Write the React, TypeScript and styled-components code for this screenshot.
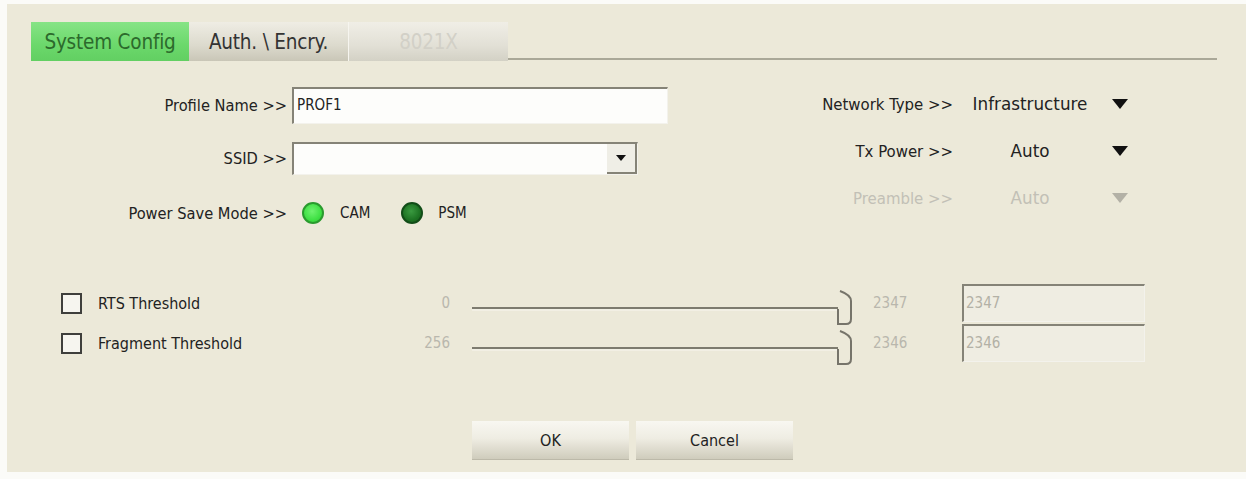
import React from 'react';
import styled, { createGlobalStyle } from 'styled-components';

const GlobalStyle = createGlobalStyle`
  html, body {
    margin: 0;
    padding: 0;
    background: #fbfbf8;
  }
  body {
    font-family: "DejaVu Sans", "Liberation Sans", sans-serif;
    font-stretch: condensed;
    color: #222;
  }
`;

const Window = styled.div`
  box-sizing: border-box;
  width: 1239px;
  height: 468px;
  margin: 4px 0 0 7px;
  background: #ece9d9;
  display: flex;
  flex-direction: column;
`;

const TabBar = styled.div`
  display: flex;
  align-items: flex-end;
  height: 39px;
  margin-top: 18px;
  padding-left: 24px;
`;

const Tab = styled.div<{ $active?: boolean; $disabled?: boolean; $w: number }>`
  box-sizing: border-box;
  width: ${p => p.$w}px;
  height: 39px;
  display: flex;
  align-items: center;
  justify-content: center;
  font-size: 20.5px;
  letter-spacing: -0.2px;
  color: ${p => (p.$active ? '#2c6a2c' : p.$disabled ? '#d2d0c7' : '#333')};
  background: ${p =>
    p.$active
      ? 'linear-gradient(#86e486, #6bd86b 60%, #62cf62)'
      : p.$disabled
      ? 'linear-gradient(#f0eee6, #e2e0d6 60%, #d3d1c5)'
      : 'linear-gradient(#efede4, #dcdacd 60%, #c9c6b7)'};
  border-left: ${p => (p.$disabled ? '1px solid #f6f5ef' : 'none')};
`;

const TabRule = styled.div`
  flex: 1;
  height: 2px;
  margin-right: 29px;
  margin-bottom: 1px;
  background: #aaa898;
`;

const FormArea = styled.div`
  display: flex;
  margin-top: 26px;
  height: 137px;
`;

const LeftForm = styled.div`
  display: flex;
  flex-direction: column;
`;

const FieldRow = styled.div<{ $h: number; $mt?: number }>`
  display: flex;
  align-items: center;
  height: ${p => p.$h}px;
  margin-top: ${p => p.$mt ?? 0}px;
`;

const FieldLabel = styled.span`
  width: 280px;
  margin-right: 5px;
  text-align: right;
  font-size: 16.3px;
  white-space: nowrap;
`;

const sunken = `
  box-sizing: border-box;
  border-top: 2px solid #858377;
  border-left: 2px solid #858377;
  border-right: 1px solid #f3f2ec;
  border-bottom: 1px solid #f3f2ec;
`;

const TextBox = styled.div`
  ${sunken}
  width: 376px;
  height: 37px;
  background: #fdfdfb;
  padding: 7px 0 0 3px;
  font-size: 15px;
`;

const SelectBox = styled.div`
  ${sunken}
  width: 346px;
  height: 33px;
  background: #fdfdfb;
  display: flex;
  justify-content: flex-end;
`;

const SelectButton = styled.div`
  box-sizing: border-box;
  width: 30px;
  height: 100%;
  background: #efeee6;
  border-right: 2px solid #858377;
  border-bottom: 2px solid #858377;
  display: flex;
  align-items: center;
  justify-content: center;
`;

const SmallArrow = styled.span`
  width: 0;
  height: 0;
  border-left: 5px solid transparent;
  border-right: 5px solid transparent;
  border-top: 6px solid #111;
`;

const Radio = styled.span<{ $on?: boolean; $ml: number }>`
  box-sizing: border-box;
  width: 22px;
  height: 22px;
  border-radius: 50%;
  margin-left: ${p => p.$ml}px;
  border: 2px solid ${p => (p.$on ? '#2a9b2e' : '#124d18')};
  background: ${p =>
    p.$on
      ? 'radial-gradient(circle at 45% 40%, #6ff26f, #3fe044 60%, #2fc436)'
      : 'radial-gradient(circle at 45% 40%, #3a9a40, #1d7323 60%, #155d1b)'};
`;

const RadioText = styled.span<{ $ml: number }>`
  margin-left: ${p => p.$ml}px;
  font-size: 15px;
`;

const RightForm = styled.div`
  display: flex;
  flex-direction: column;
  gap: 23px;
  margin: 5px 118px 0 auto;
`;

const OptionRow = styled.div<{ $dim?: boolean }>`
  display: flex;
  align-items: center;
  height: 24px;
  color: ${p => (p.$dim ? '#c2c0b6' : '#222')};
`;

const OptionLabel = styled.span`
  width: 140px;
  text-align: right;
  font-size: 16.6px;
  white-space: nowrap;
`;

const OptionValue = styled.span`
  width: 122px;
  margin-left: 16px;
  text-align: center;
  font-size: 16.8px;
  font-stretch: normal;
  white-space: nowrap;
`;

const DropArrow = styled.span<{ $dim?: boolean }>`
  width: 0;
  height: 0;
  margin-left: 21px;
  border-left: 8px solid transparent;
  border-right: 8px solid transparent;
  border-top: 10px solid ${p => (p.$dim ? '#b3b1a6' : '#111')};
`;

const Thresholds = styled.div`
  display: flex;
  flex-direction: column;
  gap: 2px;
  margin-top: 60px;
`;

const ThresholdRow = styled.div`
  display: flex;
  align-items: center;
  height: 38px;
  padding-left: 54px;
`;

const CheckBox = styled.span`
  box-sizing: border-box;
  width: 21px;
  height: 21px;
  border: 2px solid #3f3f3c;
  background: #f6f5ef;
`;

const ThresholdLabel = styled.span`
  width: 260px;
  margin-left: 16px;
  font-size: 16px;
`;

const RangeValue = styled.span<{ $w: number; $ml: number; $right?: boolean }>`
  width: ${p => p.$w}px;
  margin-left: ${p => p.$ml}px;
  text-align: ${p => (p.$right ? 'right' : 'left')};
  font-size: 15px;
  color: #b9b7ad;
`;

const SliderSvg = styled.svg`
  margin-left: 22px;
  overflow: visible;
`;

const ValueBox = styled.div`
  ${sunken}
  width: 183px;
  height: 38px;
  background: #efede2;
  padding: 8px 0 0 2px;
  font-size: 15px;
  color: #b3b1a6;
`;

const ButtonRow = styled.div`
  display: flex;
  justify-content: center;
  gap: 7px;
  margin-top: 59px;
  padding-left: 12px;
`;

const Button = styled.button`
  width: 157px;
  height: 39px;
  border: none;
  border-bottom: 1px solid #bcb9a9;
  background: linear-gradient(#f8f7f1, #efede3 45%, #cfccbc);
  font-family: inherit;
  font-stretch: condensed;
  font-size: 16px;
  color: #222;
`;

const Slider = () => (
  <SliderSvg width={380} height={38} viewBox="0 0 380 38">
    <line x1={0} y1={24} x2={366} y2={24} stroke="#7d7b6f" strokeWidth={2} />
    <line x1={0} y1={26} x2={366} y2={26} stroke="#f7f6f0" strokeWidth={1} />
    <path
      d="M368 7 Q379 11 379 17 L379 35 Q379 40 374 40 L366 40 L366 25"
      fill="none"
      stroke="#76746a"
      strokeWidth={2}
    />
  </SliderSvg>
);

const thresholds = [
  { name: 'RTS Threshold', min: '0', max: '2347' },
  { name: 'Fragment Threshold', min: '256', max: '2346' },
];

const App: React.FC = () => {
  return (
    <>
      <GlobalStyle />
      <Window>
        <TabBar>
          <Tab $active $w={158}>System Config</Tab>
          <Tab $w={159}>Auth. \ Encry.</Tab>
          <Tab $disabled $w={160}>8021X</Tab>
          <TabRule />
        </TabBar>

        <FormArea>
          <LeftForm>
            <FieldRow $h={37}>
              <FieldLabel>Profile Name &gt;&gt;</FieldLabel>
              <TextBox>PROF1</TextBox>
            </FieldRow>
            <FieldRow $h={33} $mt={18}>
              <FieldLabel>SSID &gt;&gt;</FieldLabel>
              <SelectBox>
                <SelectButton>
                  <SmallArrow />
                </SelectButton>
              </SelectBox>
            </FieldRow>
            <FieldRow $h={22} $mt={27}>
              <FieldLabel>Power Save Mode &gt;&gt;</FieldLabel>
              <Radio $on $ml={10} />
              <RadioText $ml={16}>CAM</RadioText>
              <Radio $ml={31} />
              <RadioText $ml={15}>PSM</RadioText>
            </FieldRow>
          </LeftForm>

          <RightForm>
            <OptionRow>
              <OptionLabel>Network Type &gt;&gt;</OptionLabel>
              <OptionValue>Infrastructure</OptionValue>
              <DropArrow />
            </OptionRow>
            <OptionRow>
              <OptionLabel>Tx Power &gt;&gt;</OptionLabel>
              <OptionValue>Auto</OptionValue>
              <DropArrow />
            </OptionRow>
            <OptionRow $dim>
              <OptionLabel>Preamble &gt;&gt;</OptionLabel>
              <OptionValue>Auto</OptionValue>
              <DropArrow $dim />
            </OptionRow>
          </RightForm>
        </FormArea>

        <Thresholds>
          {thresholds.map(t => (
            <ThresholdRow key={t.name}>
              <CheckBox />
              <ThresholdLabel>{t.name}</ThresholdLabel>
              <RangeValue $w={92} $ml={0} $right>{t.min}</RangeValue>
              <Slider />
              <RangeValue $w={89} $ml={21}>{t.max}</RangeValue>
              <ValueBox>{t.max}</ValueBox>
            </ThresholdRow>
          ))}
        </Thresholds>

        <ButtonRow>
          <Button>OK</Button>
          <Button>Cancel</Button>
        </ButtonRow>
      </Window>
    </>
  );
};

export default App;
